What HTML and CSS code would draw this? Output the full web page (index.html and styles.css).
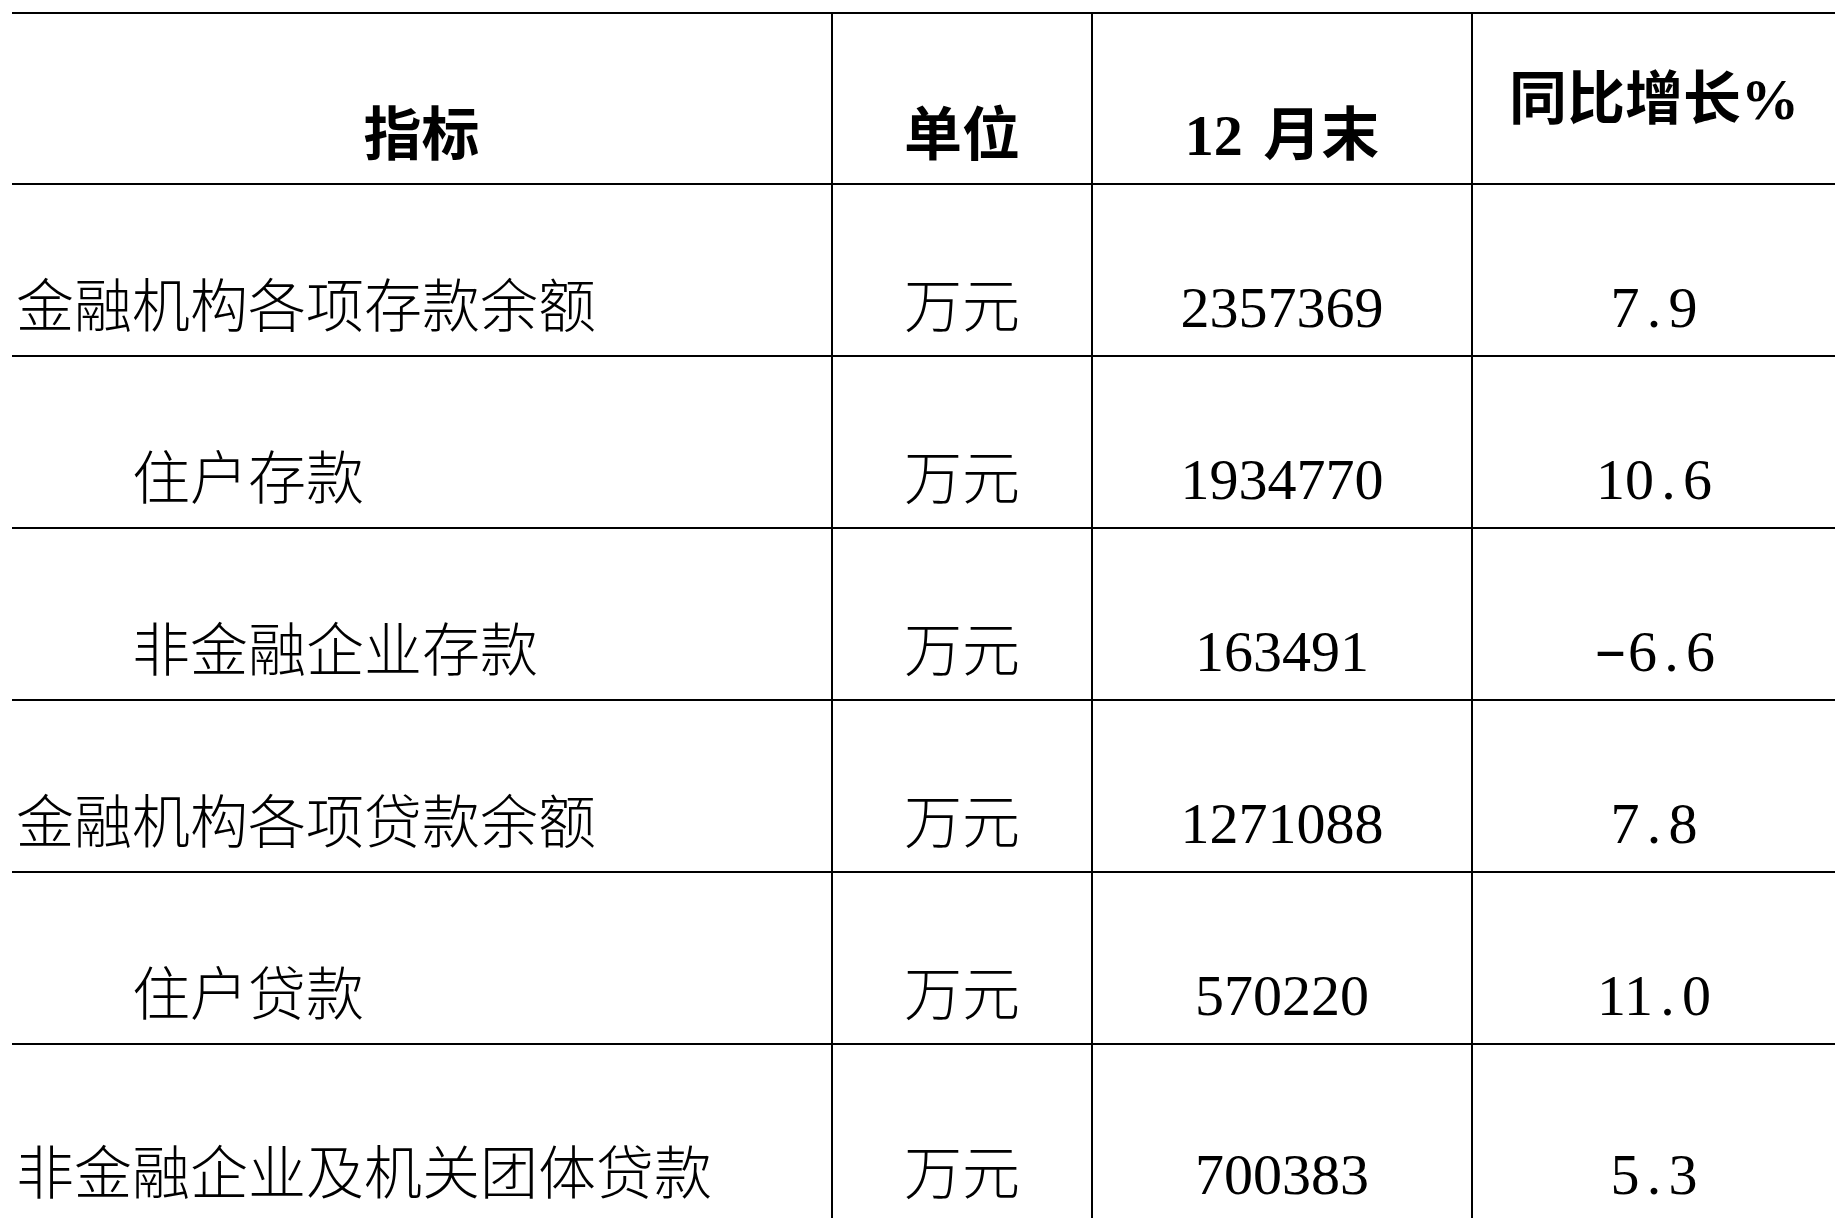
FILE: index.html
```html
<!DOCTYPE html>
<html lang="zh-CN">
<head>
<meta charset="utf-8">
<title>金融机构存贷款</title>
<link rel="stylesheet" href="styles.css">
</head>
<body>
<table class="stats">
  <colgroup>
    <col class="c-name">
    <col class="c-unit">
    <col class="c-val">
    <col class="c-pct">
  </colgroup>
  <thead>
    <tr class="head-row">
      <th>指标</th>
      <th>单位</th>
      <th>12<span class="gap">&nbsp;</span>月末</th>
      <th class="th-raised">同比增长%</th>
    </tr>
  </thead>
  <tbody>
    <tr class="row">
      <td class="name">金融机构各项存款余额</td>
      <td>万元</td>
      <td>2357369</td>
      <td>7<span class="hw">.</span>9</td>
    </tr>
    <tr class="row">
      <td class="name sub">住户存款</td>
      <td>万元</td>
      <td>1934770</td>
      <td>10<span class="hw">.</span>6</td>
    </tr>
    <tr class="row">
      <td class="name sub">非金融企业存款</td>
      <td>万元</td>
      <td>163491</td>
      <td><span class="hw minus">-</span>6<span class="hw">.</span>6</td>
    </tr>
    <tr class="row">
      <td class="name">金融机构各项贷款余额</td>
      <td>万元</td>
      <td>1271088</td>
      <td>7<span class="hw">.</span>8</td>
    </tr>
    <tr class="row">
      <td class="name sub">住户贷款</td>
      <td>万元</td>
      <td>570220</td>
      <td>11<span class="hw">.</span>0</td>
    </tr>
    <tr class="row last">
      <td class="name">非金融企业及机关团体贷款</td>
      <td>万元</td>
      <td>700383</td>
      <td>5<span class="hw">.</span>3</td>
    </tr>
  </tbody>
</table>
</body>
</html>
```
FILE: styles.css
```css
html, body {
  margin: 0;
  padding: 0;
  background: #ffffff;
}

body {
  overflow: hidden;
  color: #000000;
  font-family: "Liberation Serif", "Noto Sans CJK SC", serif;
}

.stats {
  margin: 12px 0 0 12px;
  width: 1823px;
  border-collapse: collapse;
  table-layout: fixed;
  font-size: 58px;
  line-height: 1;
}

.c-name { width: 820px; }
.c-unit { width: 260px; }
.c-val  { width: 380px; }
.c-pct  { width: 363px; }

.stats th,
.stats td {
  border: 2px solid #000;
  padding: 0 0 18px 0;
  text-align: center;
  vertical-align: bottom;
  white-space: nowrap;
}

.stats td {
  font-weight: 300;
}

.stats th:first-child,
.stats td:first-child {
  border-left: none;
}

.stats th:last-child,
.stats td:last-child {
  border-right: none;
}

.stats th {
  font-weight: bold;
}

.head-row {
  height: 171px;
}

.stats th.th-raised {
  padding-bottom: 54px;
}

.row {
  height: 172px;
}

.row.last {
  height: 200px;
}

.stats .row.last td {
  padding-bottom: 40px;
  border-bottom: none;
}

.stats td.name {
  text-align: left;
  padding-left: 4px;
}

.stats td.sub {
  padding-left: 120px;
}

.hw {
  display: inline-block;
  width: 0.5em;
  text-align: center;
}

.hw.minus {
  width: 0.6em;
  transform: translateY(-4px) scaleX(1.7);
}

.gap {
  display: inline-block;
  width: 0.35em;
}
```
